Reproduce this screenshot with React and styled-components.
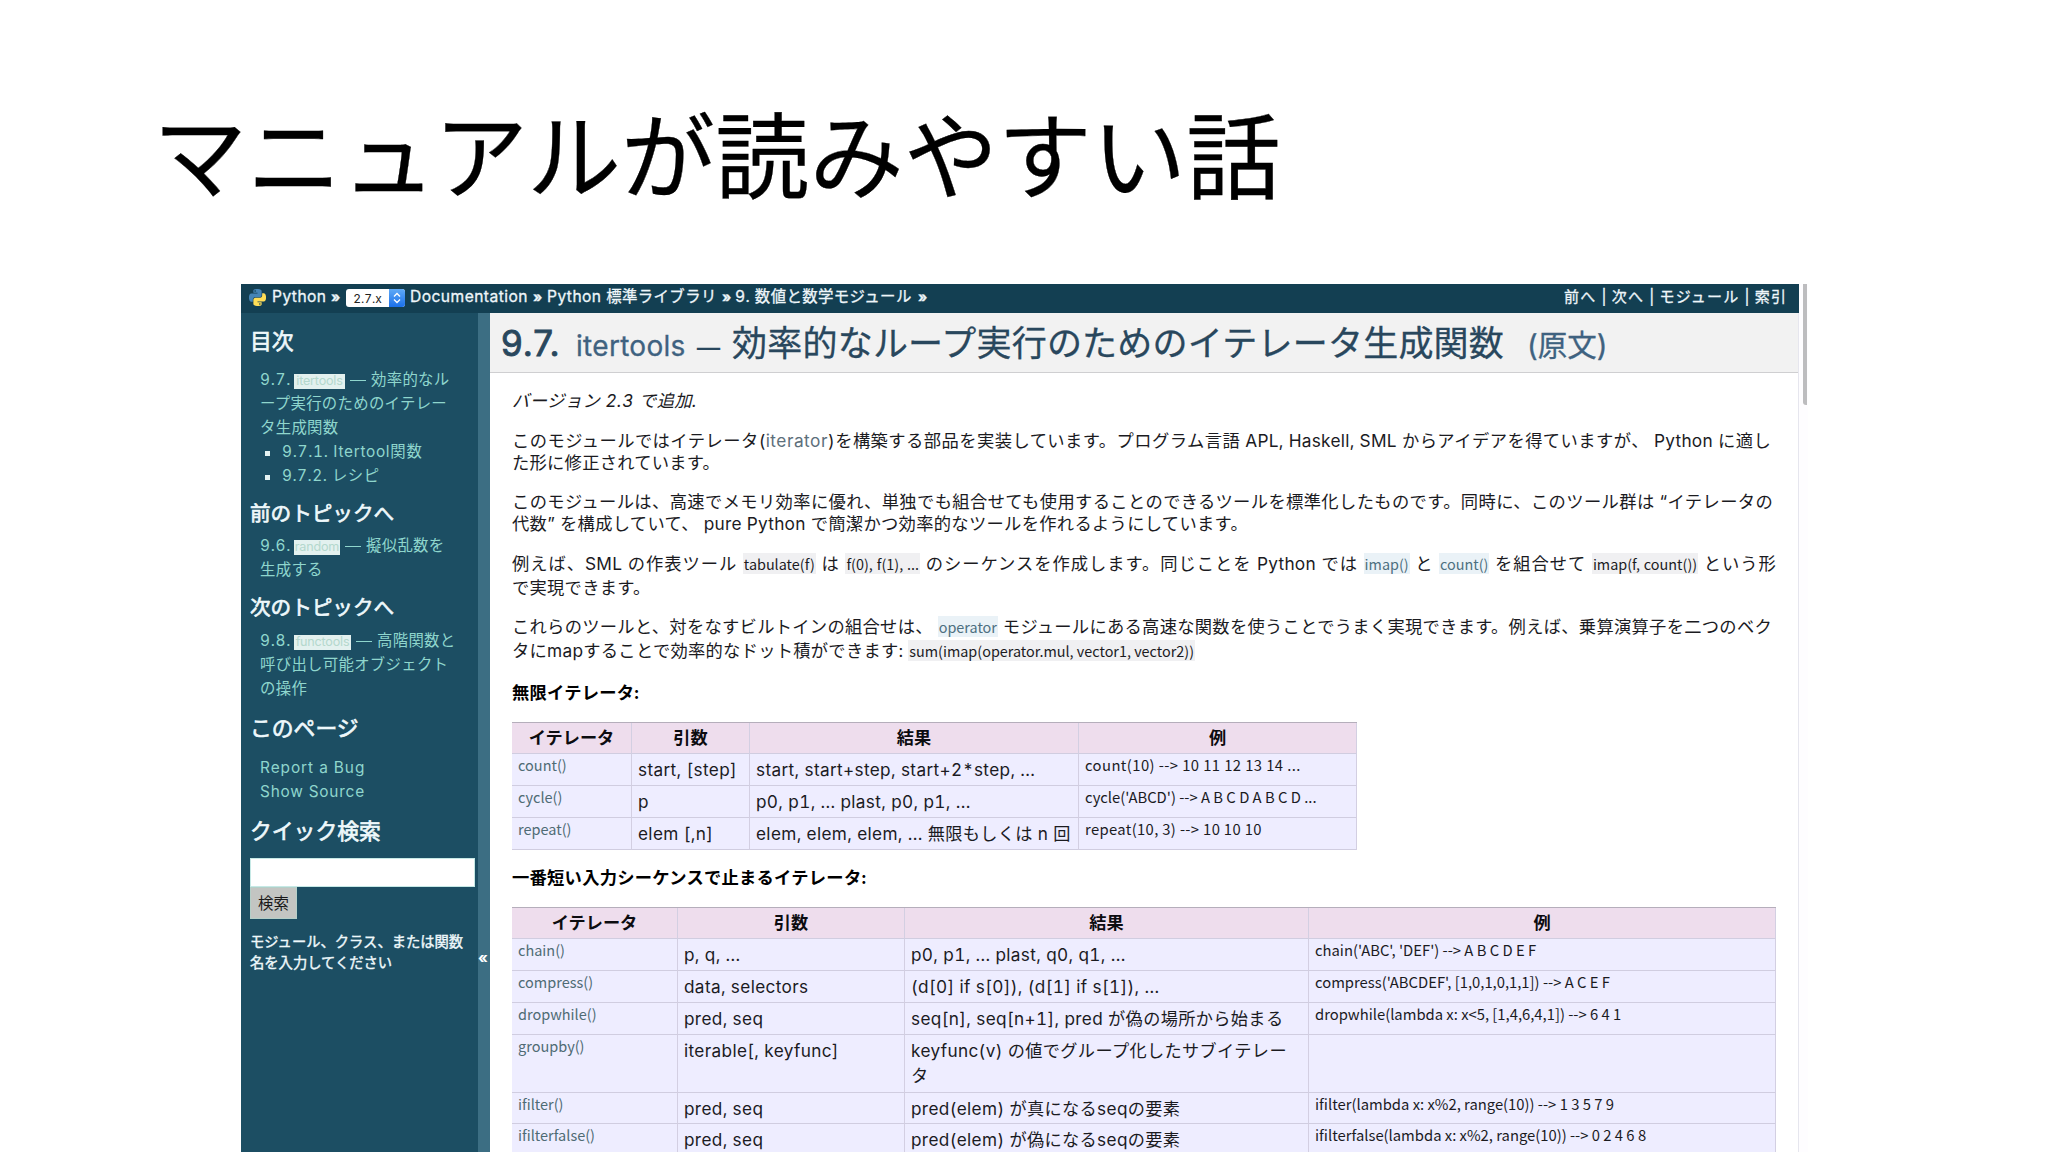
import React from "react";
import styled, { createGlobalStyle } from "styled-components";

const sans = `"Inter", "Noto Sans CJK JP", sans-serif`;
const cjk = `"Noto Sans CJK JP", "Noto Sans", sans-serif`;

const Global = createGlobalStyle`
  * { box-sizing: border-box; }
  html, body { margin: 0; padding: 0; background: #fff; }
  body {
    height: 1152px;
    overflow: hidden;
    font-family: ${sans};
    font-feature-settings: "calt" 0, "tnum" 1;
    color: #1b1b1f;
  }
`;

const Slide = styled.div`
  width: 2048px;
  height: 1152px;
  overflow: hidden;
  background: #fff;
`;
const SlideTitle = styled.h1`
  margin: 0;
  height: 284px;
  padding: 91px 0 0 153px;
  font: 400 94.2px/120px ${cjk};
  color: #000;
  white-space: nowrap;
  -webkit-text-stroke: 0.3px #000;
`;
const Shot = styled.div`
  display: flex;
  width: 1567px;
  height: 868px;
  margin-left: 241px;
  background: #fefdff;
`;
const Page = styled.div`
  width: 1558px;
  height: 868px;
  display: flex;
  flex-direction: column;
  background: #fff;
  border-right: 1px solid #e6e6ee;
`;
const ScrollTrack = styled.div`
  flex: 1;
  padding-left: 4px;
`;
const Thumb = styled.div`
  width: 4px;
  height: 121px;
  background: #bdbdbf;
  border-radius: 0 0 0 3px;
`;
const Nav = styled.nav`
  display: flex;
  align-items: center;
  width: 1558px;
  height: 29px;
  padding: 0 13px 4px 8px;
  background: #133f52;
  color: #eef6fa;
  white-space: nowrap;
`;
const Crumb = styled.span`
  display: flex;
  align-items: center;
  flex: none;
  width: ${(p) => p.$w}px;
  font-size: 15.6px;
  letter-spacing: 0.45px;
  line-height: 24px;
  -webkit-text-stroke: 0.3px currentColor;
`;
const Jp = styled.span`
  font-size: 15.4px;
  letter-spacing: 0.4px;
`;
const Arrow = styled(Crumb)`
  font-weight: 700;
  font-size: 14px;
  letter-spacing: 0;
`;
const Version = styled.span`
  display: flex;
  flex: none;
  width: 59px;
  height: 18px;
  margin: 3px 5px 0 0;
  border-radius: 3px;
  overflow: hidden;
  background: #fff;
  color: #222;
  font-size: 12px;
  line-height: 19px;
`;
const VersionText = styled.span`
  flex: 1;
  text-align: center;
`;
const Stepper = styled.span`
  width: 16px;
  display: flex;
  align-items: center;
  justify-content: center;
  background: linear-gradient(#5fa9f6, #1a70ea);
`;
const Related = styled.span`
  margin-left: auto;
  width: 222px;
  font-size: 15px;
  line-height: 24px;
  text-align-last: justify;
  -webkit-text-stroke: 0.3px currentColor;
`;
const Body = styled.div`
  display: flex;
  flex: 1;
  min-height: 0;
`;
const Sidebar = styled.aside`
  width: 237px;
  height: 839px;
  padding: 16px 0 0 9px;
  background: #1c4e63;
  color: #eef8fb;
`;
const Handle = styled.div`
  display: flex;
  width: 12px;
  height: 839px;
  padding: 634px 0 0 0;
  background: #3c6e83;
  color: #fff;
  font: 700 15px/22px ${sans};
`;
const SideHead = styled.h3`
  margin: ${(p) => p.$mt || 0}px 0 0;
  font: 400 ${(p) => p.$s || 21.8}px/24px ${sans};
  white-space: nowrap;
  -webkit-text-stroke: 0.7px currentColor;
`;
const SideLine = styled.div`
  display: flex;
  align-items: center;
  margin-top: ${(p) => p.$mt || 0}px;
  padding-left: 10px;
  height: 24px;
  font-size: 15.4px;
  letter-spacing: ${(p) => p.$track ?? 0.3}px;
  line-height: 24px;
  white-space: pre;
  color: #8fd6cd;
`;
const Num = styled.span`
  width: 34px;
  letter-spacing: 0.7px;
`;
const Mark = styled.span`
  width: ${(p) => p.$w}px;
  height: 15px;
  margin: 3px 5px 0 0;
  background: #e3f1ef;
  color: #b4d8cd;
  font-size: 12.6px;
  letter-spacing: -0.2px;
  line-height: 14px;
  text-align: center;
`;
const Dash = styled.span`
  width: 16px;
  height: 1px;
  margin: 1px 5px 0 0;
  background: currentColor;
`;
const Bullet = styled.span`
  width: 5px;
  height: 5px;
  margin: 2px 12px 0 5px;
  background: #e4f2f2;
`;
const SearchBox = styled.div`
  width: 225px;
  height: 29px;
  margin-top: 15px;
  background: #fff;
  border: 1px solid #c6e9e6;
`;
const SearchButton = styled.button`
  display: block;
  width: 47px;
  height: 32px;
  padding: 0;
  border: 1px solid #b4cfc8;
  background: #c3c5c2;
  font: 400 15.4px/27px ${sans};
  color: #1a1a1a;
`;
const Hint = styled.p`
  margin: 12px 0 0;
  font-size: 14.3px;
  line-height: 21px;
  white-space: nowrap;
  -webkit-text-stroke: 0.4px currentColor;
`;
const Main = styled.main`
  width: 1308px;
  height: 839px;
  overflow: hidden;
`;
const Heading = styled.h2`
  display: flex;
  align-items: baseline;
  height: 60px;
  margin: 0;
  padding-left: 11px;
  background: #f2f2f2;
  border-bottom: 1px solid #cfcfd1;
  color: #29475d;
  font: 400 35px/60px ${sans};
  white-space: nowrap;
`;
const HeadPart = styled.span`
  width: ${(p) => p.$w}px;
  font-size: ${(p) => p.$s || 35}px;
  letter-spacing: ${(p) => p.$track || 0}px;
  color: ${(p) => p.$c || "inherit"};
  -webkit-text-stroke: ${(p) => p.$stroke ?? 0.3}px currentColor;
`;
const Content = styled.div`
  padding: 17px 0 0 22px;
`;
const Line = styled.div`
  width: ${(p) => (p.$w ? p.$w + "px" : "auto")};
  height: 22px;
  margin-top: ${(p) => p.$mt || 0}px;
  font-size: 17.3px;
  font-style: ${(p) => (p.$italic ? "italic" : "normal")};
  font-weight: ${(p) => (p.$bold ? 700 : 400)};
  letter-spacing: ${(p) => p.$track ?? 0.25}px;
  line-height: 22px;
  white-space: nowrap;
  text-align-last: ${(p) => (p.$w ? "justify" : "left")};
  color: ${(p) => (p.$bold ? "#000" : "#1b1b1f")};
`;
const Ref = styled.a`
  color: #5d6f7b;
  letter-spacing: 0.5px;
`;
const Code = styled.code`
  padding: 0 1px;
  background: ${(p) => (p.$link ? "#eaf2f7" : "#f0f0f2")};
  color: ${(p) => (p.$link ? "#4d6f80" : "#1b1b1f")};
  font: 400 14.4px/16px ${cjk};
  letter-spacing: 0;
`;
const Table = styled.div`
  width: ${(p) => p.$w}px;
  margin-top: ${(p) => p.$mt}px;
  border-top: 1px solid #b5aebb;
`;
const Row = styled.div`
  display: grid;
  grid-template-columns: ${(p) => p.$cols};
  height: ${(p) => p.$h}px;
  background: ${(p) => (p.$head ? "#eedded" : "#eeedff")};
`;
const Cell = styled.div`
  padding: 3px 0 0 6px;
  border-right: 1px solid #d3cfe2;
  border-bottom: 1px solid #d0cde0;
  font-size: 17.2px;
  letter-spacing: 0.35px;
  line-height: 25px;
  white-space: nowrap;
`;
const HeadCell = styled(Cell)`
  padding: 2px 0 0;
  text-align: center;
  font-weight: 700;
  letter-spacing: 0;
  color: #0c0c10;
`;
const CodeCell = styled(Cell)`
  padding: 0 0 0 6px;
  font: 400 ${(p) => (p.$link ? 14.5 : 14.8)}px/21px ${cjk};
  letter-spacing: ${(p) => p.$track || 0}px;
  color: ${(p) => (p.$link ? "#4f6b74" : "#1b1b1f")};
`;

const PythonLogo = () => (
  <svg width="17" height="17" viewBox="0 0 24 24" style={{ marginTop: 2, marginRight: 6, flex: "none" }}>
    <path
      fill="#4584b6"
      d="M14.25.18l.9.2.73.26.59.3.45.32.34.34.25.34.16.33.1.3.04.26.02.2-.01.13V8.5l-.05.63-.13.55-.21.46-.26.38-.3.31-.33.25-.35.19-.35.14-.33.1-.3.07-.26.04-.21.02H8.77l-.69.05-.59.14-.5.22-.41.27-.33.32-.27.35-.2.36-.15.37-.1.35-.07.32-.04.27-.02.21v3.06H3.17l-.21-.03-.28-.07-.32-.12-.35-.18-.36-.26-.36-.36-.35-.46-.32-.59-.28-.73-.21-.88-.14-1.05-.05-1.23.06-1.22.16-1.04.24-.87.32-.71.36-.57.4-.44.42-.33.42-.24.4-.16.36-.1.32-.05.24-.01h.16l.06.01h8.16v-.83H6.18l-.01-2.75-.02-.37.05-.34.11-.31.17-.28.25-.26.31-.23.38-.2.44-.18.51-.15.58-.12.64-.1.71-.06.77-.04.84-.02 1.27.05zm-6.3 1.98l-.23.33-.08.41.08.41.23.34.33.22.41.09.41-.09.33-.22.23-.34.08-.41-.08-.41-.23-.33-.33-.22-.41-.09-.41.09z"
    />
    <path
      fill="#ffde57"
      d="M21.04 6.11l.28.06.32.12.35.18.36.27.36.35.35.47.32.59.28.73.21.88.14 1.04.05 1.23-.06 1.23-.16 1.04-.24.86-.32.71-.36.57-.4.45-.42.33-.42.24-.4.16-.36.09-.32.05-.24.02-.16-.01h-8.22v.82h5.84l.01 2.76.02.36-.05.34-.11.31-.17.29-.25.25-.31.24-.38.2-.44.17-.51.15-.58.13-.64.09-.71.07-.77.04-.84.01-1.27-.04-1.07-.14-.9-.2-.73-.25-.59-.3-.45-.33-.34-.34-.25-.34-.16-.33-.1-.3-.04-.25-.02-.2.01-.13v-5.34l.05-.64.13-.54.21-.46.26-.38.3-.32.33-.24.35-.2.35-.14.33-.1.3-.06.26-.04.21-.02.13-.01h5.84l.69-.05.59-.14.5-.21.41-.28.33-.32.27-.35.2-.36.15-.36.1-.35.07-.32.04-.28.02-.21V6.07h2.09l.14.01zm-6.47 14.25l-.23.33-.08.41.08.41.23.33.33.23.41.08.41-.08.33-.23.23-.33.08-.41-.08-.41-.23-.33-.33-.23-.41-.08-.41.08z"
    />
  </svg>
);

const infinite = [
  [32, "count()", "start, [step]", "start, start+step, start+2*step, ...", "count(10) --> 10 11 12 13 14 ...", 0.42],
  [32, "cycle()", "p", "p0, p1, ... plast, p0, p1, ...", "cycle('ABCD') --> A B C D A B C D ..."],
  [32, "repeat()", "elem [,n]", "elem, elem, elem, ... 無限もしくは n 回", "repeat(10, 3) --> 10 10 10", 0.35],
];
const finite = [
  [32, "chain()", "p, q, ...", "p0, p1, ... plast, q0, q1, ...", "chain('ABC', 'DEF') --> A B C D E F"],
  [32, "compress()", "data, selectors", "(d[0] if s[0]), (d[1] if s[1]), ...", "compress('ABCDEF', [1,0,1,0,1,1]) --> A C E F"],
  [32, "dropwhile()", "pred, seq", "seq[n], seq[n+1], pred が偽の場所から始まる", "dropwhile(lambda x: x<5, [1,4,6,4,1]) --> 6 4 1"],
  [58, "groupby()", "iterable[, keyfunc]", <>keyfunc(v) の値でグループ化したサブイテレー<br />タ</>, ""],
  [31, "ifilter()", "pred, seq", "pred(elem) が真になるseqの要素", "ifilter(lambda x: x%2, range(10)) --> 1 3 5 7 9"],
  [32, "ifilterfalse()", "pred, seq", "pred(elem) が偽になるseqの要素", "ifilterfalse(lambda x: x%2, range(10)) --> 0 2 4 6 8"],
];

const DataTable = ({ width, mt, cols, rows }) => (
  <Table $w={width} $mt={mt}>
    <Row $head $cols={cols} $h={31}>
      {["イテレータ", "引数", "結果", "例"].map((t) => (
        <HeadCell key={t}>{t}</HeadCell>
      ))}
    </Row>
    {rows.map(([h, name, args, result, example, track]) => (
      <Row key={name} $cols={cols} $h={h}>
        <CodeCell $link>{name}</CodeCell>
        <Cell>{args}</Cell>
        <Cell>{result}</Cell>
        <CodeCell $track={track}>{example}</CodeCell>
      </Row>
    ))}
  </Table>
);

export default function App() {
  return (
    <Slide>
      <Global />
      <SlideTitle>マニュアルが読みやすい話</SlideTitle>
      <Shot>
        <Page>
          <Nav>
            <PythonLogo />
            <Crumb $w={59}>Python</Crumb>
            <Arrow $w={15}>»</Arrow>
            <Version>
              <VersionText>2.7.x</VersionText>
              <Stepper>
                <svg width="8" height="12" viewBox="0 0 8 12" fill="none" stroke="#fff" strokeWidth="1.3">
                  <path d="M1 4.5 4 1.5 7 4.5M1 7.5 4 10.5 7 7.5" />
                </svg>
              </Stepper>
            </Version>
            <Crumb $w={123}>Documentation</Crumb>
            <Arrow $w={14}>»</Arrow>
            <Crumb $w={175}>Python&nbsp;<Jp>標準ライブラリ</Jp></Crumb>
            <Arrow $w={13}>»</Arrow>
            <Crumb $w={183}>9.&nbsp;<Jp>数値と数学モジュール</Jp></Crumb>
            <Arrow $w={14}>»</Arrow>
            <Related>前へ | 次へ | モジュール | 索引</Related>
          </Nav>
          <Body>
            <Sidebar>
              <SideHead>目次</SideHead>
              <SideLine $mt={15}><Num>9.7.</Num><Mark $w={51}>itertools</Mark><Dash />効率的なル</SideLine>
              <SideLine>ープ実行のためのイテレー</SideLine>
              <SideLine>タ生成関数</SideLine>
              <SideLine $track={0.7}><Bullet />9.7.1. Itertool関数</SideLine>
              <SideLine $track={0.5}><Bullet />9.7.2. レシピ</SideLine>
              <SideHead $mt={14} $s={20.6}>前のトピックへ</SideHead>
              <SideLine $mt={8}><Num>9.6.</Num><Mark $w={46}>random</Mark><Dash />擬似乱数を</SideLine>
              <SideLine>生成する</SideLine>
              <SideHead $mt={14} $s={20.6}>次のトピックへ</SideHead>
              <SideLine $mt={9}><Num>9.8.</Num><Mark $w={57}>functools</Mark><Dash />高階関数と</SideLine>
              <SideLine>呼び出し可能オブジェクト</SideLine>
              <SideLine>の操作</SideLine>
              <SideHead $mt={15}>このページ</SideHead>
              <SideLine $mt={16} $track={0.95}>Report a Bug</SideLine>
              <SideLine $track={0.8}>Show Source</SideLine>
              <SideHead $mt={15}>クイック検索</SideHead>
              <SearchBox />
              <SearchButton>検索</SearchButton>
              <Hint>モジュール、クラス、または関数<br />名を入力してください</Hint>
            </Sidebar>
            <Handle>«</Handle>
            <Main>
              <Heading>
                <HeadPart $w={75} $track={0.9} $stroke={0.9}>9.7.</HeadPart>
                <HeadPart $w={121} $s={28} $track={0.3} $c="#3f6280">itertools</HeadPart>
                <HeadPart $w={35} $s={23}>—</HeadPart>
                <HeadPart $w={795} $track={0.22}>効率的なループ実行のためのイテレータ生成関数</HeadPart>
                <HeadPart $w={90} $s={29.5} $c="#3f6280">(原文)</HeadPart>
              </Heading>
              <Content>
                <Line $italic $track={0.45}>バージョン 2.3 で追加.</Line>
                <Line $mt={18} $w={1259}>このモジュールではイテレータ(<Ref>iterator</Ref>)を構築する部品を実装しています。プログラム言語 APL, Haskell, SML からアイデアを得ていますが、 Python に適し</Line>
                <Line>た形に修正されています。</Line>
                <Line $mt={17} $w={1261}>このモジュールは、高速でメモリ効率に優れ、単独でも組合せても使用することのできるツールを標準化したものです。同時に、このツール群は “イテレータの</Line>
                <Line $w={736}>代数” を構成していて、 pure Python で簡潔かつ効率的なツールを作れるようにしています。</Line>
                <Line $mt={18} $w={1264}>例えば、SML の作表ツール <Code>tabulate(f)</Code> は <Code>f(0), f(1), ...</Code> のシーケンスを作成します。同じことを Python では <Code $link>imap()</Code> と <Code $link>count()</Code> を組合せて <Code>imap(f, count())</Code> という形</Line>
                <Line $mt={2}>で実現できます。</Line>
                <Line $mt={17} $w={1260}>これらのツールと、対をなすビルトインの組合せは、 <Code $link>operator</Code> モジュールにある高速な関数を使うことでうまく実現できます。例えば、乗算演算子を二つのベク</Line>
                <Line $mt={2} $w={683}>タにmapすることで効率的なドット積ができます: <Code>sum(imap(operator.mul, vector1, vector2))</Code></Line>
                <Line $mt={20} $bold>無限イテレータ:</Line>
                <DataTable width={845} mt={18} cols="120px 118px 329px 278px" rows={infinite} />
                <Line $mt={17} $bold>一番短い入力シーケンスで止まるイテレータ:</Line>
                <DataTable width={1264} mt={18} cols="166px 227px 404px 467px" rows={finite} />
              </Content>
            </Main>
          </Body>
        </Page>
        <ScrollTrack>
          <Thumb />
        </ScrollTrack>
      </Shot>
    </Slide>
  );
}
